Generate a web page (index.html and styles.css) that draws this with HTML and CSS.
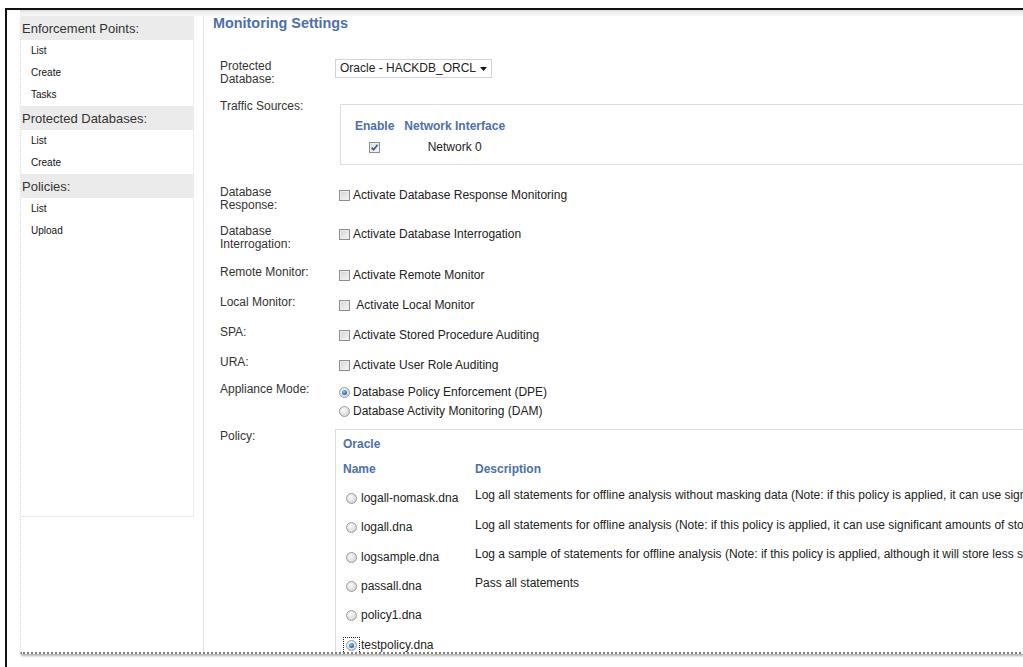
FILE: index.html
```html
<!DOCTYPE html>
<html lang="en">
<head>
<meta charset="utf-8">
<title>Monitoring Settings</title>
<link rel="stylesheet" href="styles.css">
</head>
<body>
<div class="frame">
  <div class="sheet">
    <div class="sheet-top"></div>
    <div class="sheet-body">
      <aside class="side">
        <nav class="side-panel">
          <div class="side-head">Enforcement Points:</div>
          <a class="side-link">List</a>
          <a class="side-link">Create</a>
          <a class="side-link">Tasks</a>
          <div class="side-head">Protected Databases:</div>
          <a class="side-link">List</a>
          <a class="side-link">Create</a>
          <div class="side-head">Policies:</div>
          <a class="side-link">List</a>
          <a class="side-link">Upload</a>
        </nav>
      </aside>

      <main class="main">
        <h1 class="title">Monitoring Settings</h1>

        <div class="form">
          <div class="label">Protected<br>Database:</div>
          <div class="value value--select">
            <div class="select">
              <span>Oracle - HACKDB_ORCL</span>
              <svg class="select-arrow" width="7" height="4" viewBox="0 0 7 4"><polygon points="0,0 7,0 3.5,4" fill="#111"/></svg>
            </div>
          </div>

          <div class="label">Traffic Sources:</div>
          <div class="value value--box">
            <div class="ts-box">
              <table class="ts-table">
                <tr><th>Enable</th><th>Network Interface</th></tr>
                <tr>
                  <td><span class="cb cb--on"><svg width="9" height="9" viewBox="0 0 9 9"><polyline points="1.6,4.6 3.6,6.8 7.6,1.8" fill="none" stroke="#3f5577" stroke-width="1.6"/></svg></span></td>
                  <td>Network 0</td>
                </tr>
              </table>
            </div>
          </div>

          <div class="label">Database<br>Response:</div>
          <div class="value"><label class="check"><span class="cb"></span>Activate Database Response Monitoring</label></div>

          <div class="label">Database<br>Interrogation:</div>
          <div class="value"><label class="check"><span class="cb"></span>Activate Database Interrogation</label></div>

          <div class="label">Remote Monitor:</div>
          <div class="value"><label class="check"><span class="cb"></span>Activate Remote Monitor</label></div>

          <div class="label">Local Monitor:</div>
          <div class="value"><label class="check"><span class="cb"></span>&nbsp;Activate Local Monitor</label></div>

          <div class="label">SPA:</div>
          <div class="value"><label class="check"><span class="cb"></span>Activate Stored Procedure Auditing</label></div>

          <div class="label">URA:</div>
          <div class="value"><label class="check"><span class="cb"></span>Activate User Role Auditing</label></div>

          <div class="label">Appliance Mode:</div>
          <div class="value value--radios">
            <label class="check check--radio"><span class="rb rb--on"></span>Database Policy Enforcement (DPE)</label>
            <label class="check check--radio"><span class="rb"></span>Database Activity Monitoring (DAM)</label>
          </div>

          <div class="label">Policy:</div>
          <div class="value value--box">
            <div class="policy-box">
              <div class="policy-vendor">Oracle</div>
              <div class="policy-grid">
                <div class="ph">Name</div>
                <div class="ph">Description</div>

                <label class="pname"><span class="rb"></span>logall-nomask.dna</label>
                <div class="pdesc">Log all statements for offline analysis without masking data (Note: if this policy is applied, it can use significant amounts of storage)</div>

                <label class="pname"><span class="rb"></span>logall.dna</label>
                <div class="pdesc">Log all statements for offline analysis (Note: if this policy is applied, it can use significant amounts of storage)</div>

                <label class="pname"><span class="rb"></span>logsample.dna</label>
                <div class="pdesc">Log a sample of statements for offline analysis (Note: if this policy is applied, although it will store less statements, it can still use significant amounts of storage)</div>

                <label class="pname"><span class="rb"></span>passall.dna</label>
                <div class="pdesc">Pass all statements</div>

                <label class="pname"><span class="rb"></span>policy1.dna</label>
                <div class="pdesc"></div>

                <label class="pname"><span class="rb-focus"><span class="rb rb--on"></span></span>testpolicy.dna</label>
                <div class="pdesc"></div>
              </div>
            </div>
          </div>
        </div>
      </main>
    </div>
  </div>
</div>
</body>
</html>
```

FILE: styles.css
```css
html, body {
  margin: 0;
  padding: 0;
  overflow: hidden;
  background: #fff;
}

body {
  font-family: "Liberation Sans", Arial, sans-serif;
  font-size: 12px;
  color: #333;
}

/* outer window frame */
.frame {
  box-sizing: border-box;
  width: 1100px;
  height: 659px;
  margin: 8px 0 0 5px;
  padding-left: 13px;
  border-left: 2px solid #111;
  border-top: 2px solid #111;
}

/* the page sheet, with ragged left and bottom edges */
.sheet {
  box-sizing: border-box;
  height: 644px;
  display: flex;
  flex-direction: column;
  overflow: hidden;
  border-left: 1px dotted #dcdcdc;
  border-bottom: 2px dotted #7d7d7d;
  box-shadow: 0 3px 2px -1px rgba(0, 0, 0, 0.3);
}

.sheet-top {
  flex: none;
  height: 6px;
  background: linear-gradient(#d9d9d9, #efefef 35%, #f7f7f7);
}

.sheet-body {
  flex: 1;
  min-height: 0;
  display: flex;
}

/* left navigation */
.side {
  flex: none;
  box-sizing: border-box;
  width: 183px;
  padding-right: 9px;
  border-right: 1px solid #e3e3e3;
}

.side-panel {
  box-sizing: border-box;
  height: 501px;
  display: flex;
  flex-direction: column;
  border-right: 1px solid #ececec;
  border-bottom: 1px solid #ececec;
}

.side-head {
  height: 24px;
  line-height: 25px;
  padding-left: 1px;
  background: #ebebeb;
  font-size: 13px;
  color: #333;
}

.side-link {
  height: 22px;
  line-height: 22px;
  padding-left: 10px;
  font-size: 10px;
  color: #111;
}

/* main settings area */
.main {
  flex: 1;
  min-width: 0;
  padding-left: 9px;
}

.title {
  margin: 0;
  font-size: 14.4px;
  line-height: 15px;
  font-weight: bold;
  color: #4d70a8;
}

.form {
  display: grid;
  grid-template-columns: 115px auto;
  grid-template-rows: 39.5px 86.7px 39.3px 40.7px 30px 30px 29.6px 27px 47.7px auto;
  margin: 29px 0 0 7px;
}

.label {
  line-height: 13px;
  color: #333;
}

.value {
  padding-top: 3px;
  line-height: 13px;
}

.value--select {
  padding-top: 0;
  margin-top: -1px;
}

.value--box,
.value--radios {
  padding-top: 0;
}

/* dropdown */
.select {
  box-sizing: border-box;
  width: 157px;
  height: 19px;
  display: flex;
  align-items: center;
  padding-left: 4px;
  border: 1px solid #d3d3d3;
  background: #fff;
  color: #222;
}

.select-arrow {
  margin-left: auto;
  margin-right: 4px;
}

/* checkbox + radio rows */
.check {
  display: flex;
  align-items: center;
  gap: 3px;
  margin-left: 4px;
  color: #222;
}

.check--radio {
  line-height: 19px;
}

.cb {
  box-sizing: border-box;
  width: 11px;
  height: 11px;
  display: inline-flex;
  align-items: center;
  justify-content: center;
  flex: none;
  border: 1px solid #8e8e8e;
  background: linear-gradient(135deg, #d3d3d3, #f6f6f6);
  box-shadow: inset 0 0 0 1px #ededed;
}

.cb--on {
  background: linear-gradient(135deg, #dadada, #fbfbfb);
  vertical-align: middle;
}

.rb {
  position: relative;
  box-sizing: border-box;
  width: 11px;
  height: 11px;
  flex: none;
  border-radius: 50%;
  border: 1px solid #9c9c9c;
  background: radial-gradient(circle at 40% 35%, #fbfbfb, #dadada 70%, #cfcfcf);
}

.rb--on::after {
  content: "";
  position: absolute;
  left: 2px;
  top: 2px;
  width: 5px;
  height: 5px;
  border-radius: 50%;
  background: radial-gradient(circle at 40% 35%, #8fcaf5, #2a78c2 55%, #0f4d8e);
}

/* keyboard focus ring around the selected policy radio */
.rb-focus {
  display: inline-flex;
  flex: none;
  padding: 2px;
  margin: 0 -3px 0 -3px;
  border: 1px dotted #222;
}

/* traffic sources */
.ts-box {
  box-sizing: border-box;
  width: 720px;
  height: 61px;
  margin: 4.5px 0 0 5px;
  padding: 10.5px 0 0 8px;
  border: 1px solid #dedede;
}

.ts-table {
  border-collapse: separate;
  border-spacing: 2px;
}

.ts-table th {
  padding: 1px 4px;
  line-height: 15px;
  font-weight: bold;
  color: #4d70a8;
  text-align: center;
}

.ts-table td {
  padding: 3px 4px 1px;
  line-height: 15px;
  text-align: center;
  color: #222;
}

/* policy list */
.policy-box {
  box-sizing: border-box;
  width: 720px;
  height: 300px;
  margin-top: -1px;
  padding: 7px 0 0 7px;
  border: 1px solid #dedede;
}

.policy-vendor {
  line-height: 15px;
  font-weight: bold;
  color: #4d70a8;
}

.policy-grid {
  display: grid;
  grid-template-columns: 132px auto;
  grid-template-rows: 21px;
  grid-auto-rows: 29.3px;
  margin-top: 10px;
}

.ph {
  line-height: 15px;
  font-weight: bold;
  color: #4d70a8;
}

.pname {
  display: flex;
  align-items: center;
  gap: 4px;
  height: 15px;
  padding: 7.6px 0 0 3px;
  line-height: 15px;
  color: #222;
}

.pdesc {
  padding-top: 4.8px;
  line-height: 15px;
  white-space: nowrap;
  color: #222;
}
```
